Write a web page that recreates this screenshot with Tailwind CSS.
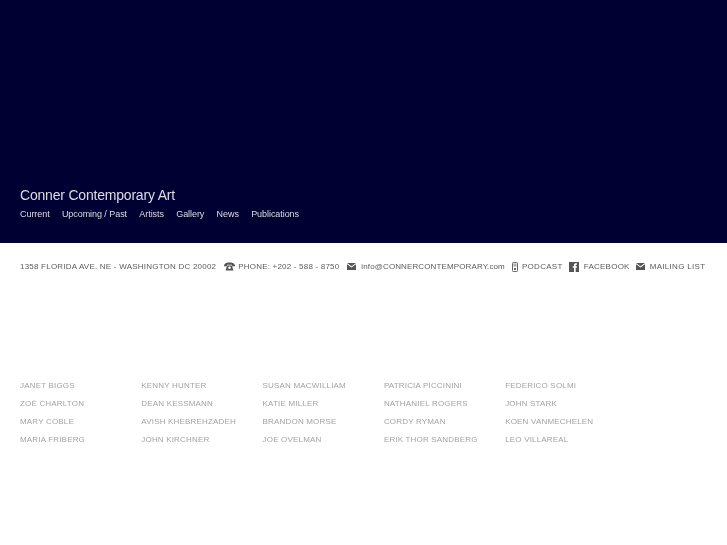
<!DOCTYPE html>
<html lang="en">
<head>
  <meta charset="UTF-8" />
  <title>Conner Contemporary Art</title>
  <script src="https://cdn.jsdelivr.net/npm/@tailwindcss/browser@4"></script>
</head>
<body class="bg-white font-['Liberation_Sans',Arial,sans-serif] overflow-hidden">

  <!-- Header -->
  <header class="h-[243px] bg-[#000033] pl-5 pt-[187px] text-[#dcdce6]">
    <h1 class="text-[14px] leading-4 tracking-[-0.2px] will-change-transform">Conner Contemporary Art</h1>
    <nav class="flex gap-[12.3px] mt-[5px] text-[9px] leading-[12px] tracking-[-0.06px] will-change-transform">
      <a href="#">Current</a>
      <a href="#">Upcoming / Past</a>
      <a href="#">Artists</a>
      <a href="#">Gallery</a>
      <a href="#">News</a>
      <a href="#">Publications</a>
    </nav>
  </header>

  <!-- Contact bar -->
  <div class="flex items-center h-[13px] mt-[17px] pl-5 text-[8px] leading-[13px] tracking-[0.2px] text-[#5c5c5c] whitespace-nowrap will-change-transform">
    <span class="tracking-[0.22px]">1358 FLORIDA AVE. NE - WASHINGTON DC 20002</span>
    <svg class="ml-2 mr-[3px]" width="11" height="9" viewBox="0 0 11 9" fill="#555"><path d="M0 3.2C1 .8 3 .5 5.5.5s4.500.3 5.500 2.700V4.200H8V2.800H3V4.200H0zM3.200 3.600H7.800L9.500 8.500H1.500z"/><circle cx="5.500" cy="5.800" r="1.300" fill="#fff"/></svg>
    <span>PHONE: +202 - 588 - 8750</span>
    <svg class="ml-2 mr-[5px]" width="9" height="7" viewBox="0 0 9 7" fill="#555"><path d="M0 0H9L4.500 3.200zM0 1.200L4.500 4.400L9 1.200V7H0z"/></svg>
    <span class="tracking-[0.12px]">info@CONNERCONTEMPORARY.com</span>
    <svg class="ml-[7px] mr-1" width="6" height="10" viewBox="0 0 6 10"><rect x=".5" y=".5" width="5" height="9" rx=".8" fill="#fff" stroke="#666"/><rect x="1.500" y="1.500" width="3" height="3" fill="#aaa"/><rect x="2" y="6" width="2" height="2" fill="#666"/></svg>
    <span class="tracking-[0.3px]">PODCAST</span>
    <svg class="ml-[6px] mr-[5px]" width="10" height="10" viewBox="0 0 10 10"><rect width="10" height="10" fill="#555"/><path d="M5 10V5.800H3.800V4.200H5V3C5 1.800 5.800 1.300 6.800 1.300H8V2.800H7.200C6.800 2.800 6.700 3 6.700 3.300V4.200H8L7.800 5.800H6.700V10z" fill="#fff"/></svg>
    <span class="tracking-[0.25px]">FACEBOOK</span>
    <svg class="ml-[6px] mr-[5px]" width="9" height="7" viewBox="0 0 9 7" fill="#555"><path d="M0 0H9L4.500 3.200zM0 1.200L4.500 4.400L9 1.200V7H0z"/></svg>
    <span class="tracking-[0.3px]">MAILING LIST</span>
  </div>

  <!-- Artists -->
  <main class="grid grid-cols-[121.3px_121.3px_121.3px_121.3px_121.3px] pl-5 mt-[104px] text-[8px] leading-[18px] tracking-[0.18px] text-[#a3a3a3] whitespace-nowrap will-change-transform">
    <ul>
      <li>JANET BIGGS</li>
      <li>ZOË CHARLTON</li>
      <li>MARY COBLE</li>
      <li>MARIA FRIBERG</li>
    </ul>
    <ul>
      <li>KENNY HUNTER</li>
      <li>DEAN KESSMANN</li>
      <li>AVISH KHEBREHZADEH</li>
      <li>JOHN KIRCHNER</li>
    </ul>
    <ul>
      <li>SUSAN MACWILLIAM</li>
      <li>KATIE MILLER</li>
      <li>BRANDON MORSE</li>
      <li>JOE OVELMAN</li>
    </ul>
    <ul>
      <li>PATRICIA PICCININI</li>
      <li>NATHANIEL ROGERS</li>
      <li>CORDY RYMAN</li>
      <li>ERIK THOR SANDBERG</li>
    </ul>
    <ul>
      <li>FEDERICO SOLMI</li>
      <li>JOHN STARK</li>
      <li>KOEN VANMECHELEN</li>
      <li>LEO VILLAREAL</li>
    </ul>
  </main>
</body>
</html>
